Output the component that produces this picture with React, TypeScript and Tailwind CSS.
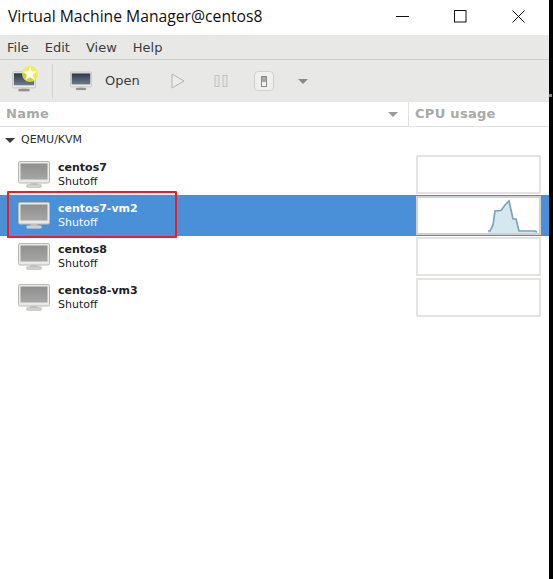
const vms = [
  { name: "centos7", selected: false },
  { name: "centos7-vm2", selected: true },
  { name: "centos8", selected: false },
  { name: "centos8-vm3", selected: false },
];

function Monitor({ id, dark, className }: { id: string; dark?: boolean; className: string }) {
  return (
    <svg viewBox="0 0 32 27" className={className}>
      <defs>
        <linearGradient id={id} x1="0" y1="0" x2="0" y2="1">
          <stop offset="0" stopColor={dark ? "#2e3a4a" : "#8f8f8f"} />
          <stop offset="1" stopColor={dark ? "#6d7b8d" : "#a6a6a6"} />
        </linearGradient>
      </defs>
      <path d="M13 21h6l1 3h-8z" fill="#c9c9c7" />
      <rect x="8.5" y="23.5" width="15" height="3" rx="1.2" fill={dark ? "#8a8a88" : "#cfcfcd"} stroke="#b5b5b3" strokeWidth="0.5" />
      <rect x="0.5" y="0.5" width="31" height="21.5" rx="1.5" fill="#e9e9e7" stroke="#b9b9b7" />
      <rect x="2.5" y="2.5" width="27" height="16" fill={`url(#${id})`} />
    </svg>
  );
}

function VmRow({ name, selected, index }: { name: string; selected: boolean; index: number }) {
  return (
    <div className={`flex h-[41px] items-center pl-[18px] pr-2 ${selected ? "bg-[#4a90d9] text-white" : "text-[#222]"}`}>
      <Monitor id={`vm-${index}`} className="h-[27px] w-[32px] shrink-0" />
      <div className="ml-2 w-[358px] pt-px text-[11px] leading-[14px]">
        <div className="font-bold">{name}</div>
        <div>Shutoff</div>
      </div>
      <div className={`flex h-[39px] w-[125px] shrink-0 items-end border-2 bg-white ${selected ? "border-[#cfd0d2]" : "border-[#e4e3e2]"}`}>
        {selected && (
          <svg viewBox="0 0 121 35" className="h-[35px] w-[121px]">
            <path
              d="M70 33H72L75 27L77 13L83 12.5L87 7L91 3L95 21H98L101 33H119V35H70Z"
              fill="#d5e8ef"
            />
            <path
              d="M70 33H72L75 27L77 13L83 12.5L87 7L91 3L95 21H98L101 33H117L119 34"
              fill="none"
              stroke="#74a7b8"
              strokeWidth="1.7"
            />
          </svg>
        )}
      </div>
    </div>
  );
}

export default function App() {
  return (
    <div className="flex h-[579px] w-[553px] overflow-hidden bg-white font-['DejaVu_Sans',sans-serif]">
      <div className="relative w-[549px] shrink-0">
        <div className="flex h-[35px] items-center justify-between pb-[2px] pl-2 pr-[24px] font-['Open_Sans',sans-serif] text-[15.7px] text-[#111]">
          <span>Virtual Machine Manager@centos8</span>
          <div className="flex items-center gap-[45px]">
            <svg viewBox="0 0 13 13" className="h-[13px] w-[13px]">
              <path d="M0 6.5H13" stroke="#111" fill="none" />
            </svg>
            <svg viewBox="0 0 13 13" className="h-[13px] w-[13px]">
              <rect x="0.5" y="0.5" width="11.5" height="11.5" stroke="#111" fill="none" />
            </svg>
            <svg viewBox="0 0 13 13" className="h-[13px] w-[13px]">
              <path d="M0.5 0.5L12.5 12.5M12.5 0.5L0.5 12.5" stroke="#111" fill="none" />
            </svg>
          </div>
        </div>

        <div className="flex h-[25px] items-center gap-[16px] border-b border-[#cdcdcb] bg-[#e8e8e7] pl-[7px] pt-[2px] text-[13px] text-[#3d3d3d]">
          <span>File</span>
          <span>Edit</span>
          <span>View</span>
          <span>Help</span>
        </div>

        <div className="flex h-[42px] items-center bg-[#e8e8e7] text-[13px] text-[#3d3d3d]">
          <div className="relative ml-3 h-[21px] w-[24px]">
            <Monitor id="new-vm" dark className="h-[21px] w-[24px]" />
            <svg viewBox="0 0 16 16" className="absolute -right-[2px] -top-[5px] h-[16px] w-[16px]">
              <circle cx="8" cy="8" r="8" fill="#f4ee2e" opacity="0.8" />
              <path d="M8 1L10 5.6H15L11.2 8.8L12.6 14L8 11.2L3.4 14L4.8 8.8L1 5.6H6Z" fill="#fffff2" />
            </svg>
          </div>
          <div className="ml-[16px] h-[34px] w-px bg-[#d2d2d0]" />
          <Monitor id="open-vm" dark className="ml-[17px] h-[20px] w-[22px]" />
          <span className="ml-[13px]">Open</span>
          <svg viewBox="0 0 14 16" className="ml-[31px] h-[16px] w-[14px]">
            <path d="M1 1L13 8L1 15Z" fill="#ececeb" stroke="#b4b4b2" />
          </svg>
          <svg viewBox="0 0 14 12" className="ml-[29px] h-[12px] w-[14px]">
            <rect x="1" y="0.5" width="4" height="11" fill="#e4e4e3" stroke="#c2c2c0" />
            <rect x="9" y="0.5" width="4" height="11" fill="#e4e4e3" stroke="#c2c2c0" />
          </svg>
          <div className="ml-[26px] flex h-[20px] w-[20px] items-center justify-center rounded-[4px] border border-[#d2d2d0] bg-[#efefee]">
            <div className="flex h-[11px] w-[6px] items-end border border-[#8c8c8a] bg-[#a8a8a6]">
              <div className="h-[4px] w-full bg-[#f2f2f1]" />
            </div>
          </div>
          <svg viewBox="0 0 10 5" className="ml-[24px] h-[5px] w-[10px]">
            <path d="M0 0H10L5 5Z" fill="#8a8a88" />
          </svg>
        </div>

        <div className="flex h-[25px] border-b border-[#e2e2e0] text-[13px] font-bold tracking-[0.3px] text-[#a9a9a7]">
          <div className="flex w-[409px] items-center justify-between border-r border-[#e2e2e0] pl-[6px] pr-[10px]">
            <span>Name</span>
            <svg viewBox="0 0 10 5" className="h-[5px] w-[10px]">
              <path d="M0 0H10L5 5Z" fill="#9a9a98" />
            </svg>
          </div>
          <div className="flex items-center pl-[6px]">CPU usage</div>
        </div>

        <div className="flex h-[27px] items-center gap-[6px] pl-[5px] text-[11px] text-[#2e2e2e]">
          <svg viewBox="0 0 10 5" className="h-[5px] w-[10px]">
            <path d="M0 0H10L5 5Z" fill="#3a3a3a" />
          </svg>
          <span>QEMU/KVM</span>
        </div>

        {vms.map((vm, i) => (
          <VmRow key={vm.name} name={vm.name} selected={vm.selected} index={i} />
        ))}

        <div className="absolute left-[7px] top-[191px] h-[47px] w-[170px] rounded-[1px] border-2 border-[#ee1c25]" />
      </div>
      <div className="relative w-[4px] shrink-0 bg-black">
        <div className="absolute left-0 top-[94px] h-[3px] w-[3px] bg-[#8a7f78]" />
      </div>
    </div>
  );
}
